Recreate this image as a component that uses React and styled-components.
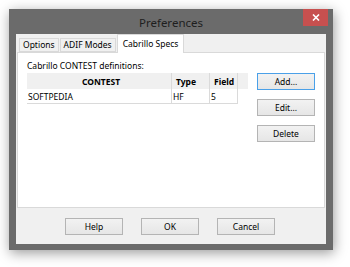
import React from 'react';
import styled, { createGlobalStyle } from 'styled-components';

const GlobalStyle = createGlobalStyle`
    html, body {
        margin: 0;
        background: #ffffff;
    }
    body {
        font-family: "Noto Sans", "Open Sans", sans-serif;
        font-size: 8.5px;
        color: #000;
    }
`;

const contests = [
    { name: 'SOFTPEDIA', type: 'HF', field: '5' },
];

const Page = () => {
    return (
        <Screen>
            <GlobalStyle />
            <Window>
                <TitleBar>
                    <Title>Preferences</Title>
                    <CloseButton>
                        <svg width="8" height="7" viewBox="0 0 8 7">
                            <path d="M1 0.5 L7 6.5 M7 0.5 L1 6.5" stroke="#fff" strokeWidth="1.6" />
                        </svg>
                    </CloseButton>
                </TitleBar>
                <Client>
                    <TabStrip>
                        <Tab>Options</Tab>
                        <Tab>ADIF Modes</Tab>
                        <Tab active>Cabrillo Specs</Tab>
                    </TabStrip>
                    <Panel>
                        <ListArea>
                            <Label>Cabrillo CONTEST definitions:</Label>
                            <Table>
                                <HeaderRow>
                                    <HeadCell width={145}>CONTEST</HeadCell>
                                    <HeadCell width={38} align="left">Type</HeadCell>
                                    <HeadCell width={28} align="left">Field</HeadCell>
                                    <HeadCell width={10} />
                                </HeaderRow>
                                {contests.map((c) => (
                                    <DataRow key={c.name}>
                                        <Cell width={145}>{c.name}</Cell>
                                        <Cell width={38}>{c.type}</Cell>
                                        <Cell width={28}>{c.field}</Cell>
                                    </DataRow>
                                ))}
                            </Table>
                        </ListArea>
                        <SideButtons>
                            <Button primary>Add...</Button>
                            <Button>Edit...</Button>
                            <Button>Delete</Button>
                        </SideButtons>
                    </Panel>
                    <Footer>
                        <Button>Help</Button>
                        <Button>OK</Button>
                        <Button>Cancel</Button>
                    </Footer>
                </Client>
            </Window>
        </Screen>
    );
};

export default Page;

const Screen = styled.div`
    width: 350px;
    height: 267px;
    padding: 9px 0 0 9px;
    box-sizing: border-box;
    overflow: hidden;
`;

const Window = styled.div`
    width: 324px;
    height: 241px;
    background: #6b6b6b;
    display: flex;
    flex-direction: column;
    box-shadow: 1px 3px 12px rgba(0, 0, 0, 0.4);
`;

const TitleBar = styled.div`
    height: 24px;
    position: relative;
    display: flex;
    align-items: center;
    justify-content: center;
`;

const Title = styled.div`
    font-size: 11.5px;
    color: #1e1e1e;
    margin-top: 2px;
`;

const CloseButton = styled.div`
    position: absolute;
    top: 0;
    right: 5px;
    width: 25px;
    height: 17px;
    background: #c7504f;
    display: flex;
    align-items: center;
    justify-content: center;
`;

const Client = styled.div`
    flex: 1;
    margin: 1px 7px 6px 7px;
    background: #f0f0f0;
    display: flex;
    flex-direction: column;
    padding: 0 1px;
`;

const TabStrip = styled.div`
    display: flex;
    align-items: flex-end;
    height: 18px;
    padding-left: 2px;
    position: relative;
    z-index: 1;
`;

const Tab = styled.div`
    height: ${(p) => (p.active ? '18px' : '12px')};
    padding: 0 ${(p) => (p.active ? '5px' : '3px')};
    margin-right: ${(p) => (p.active ? '0' : '1px')};
    margin-bottom: ${(p) => (p.active ? '-1px' : '0')};
    background: ${(p) => (p.active ? '#ffffff' : '#f0f0f0')};
    border: 1px solid #d9d9d9;
    border-bottom: ${(p) => (p.active ? 'none' : '1px solid #d9d9d9')};
    display: flex;
    align-items: center;
    font-size: 8.5px;
    line-height: 1;
    color: #000;
`;

const Panel = styled.div`
    height: 156px;
    background: #ffffff;
    border: 1px solid #d9d9d9;
    display: flex;
    padding: 7px 0 0 9px;
    box-sizing: border-box;
`;

const ListArea = styled.div`
    display: flex;
    flex-direction: column;
`;

const Label = styled.div`
    font-size: 8.5px;
    line-height: 11px;
    margin-bottom: 2px;
`;

const Table = styled.div`
    display: flex;
    flex-direction: column;
`;

const HeaderRow = styled.div`
    display: flex;
    height: 16px;
    background: #f0f0f0;
`;

const HeadCell = styled.div`
    width: ${(p) => p.width}px;
    box-sizing: border-box;
    border-right: 1px solid #dadada;
    font-weight: bold;
    font-size: 8.5px;
    display: flex;
    align-items: center;
    justify-content: ${(p) => (p.align === 'left' ? 'flex-start' : 'center')};
    padding-left: 4px;
    &:last-child {
        border-right: none;
    }
`;

const DataRow = styled.div`
    display: flex;
    height: 15px;
`;

const Cell = styled.div`
    width: ${(p) => p.width}px;
    box-sizing: border-box;
    border-right: 1px solid #dadada;
    border-bottom: 1px solid #dadada;
    font-size: 8.5px;
    display: flex;
    align-items: center;
    padding-left: 1px;
`;

const SideButtons = styled.div`
    display: flex;
    flex-direction: column;
    gap: 9px;
    margin-left: 9px;
    margin-top: 13px;
`;

const Button = styled.div`
    width: 58px;
    height: 17px;
    box-sizing: border-box;
    border: 1px solid ${(p) => (p.primary ? '#4aa0e8' : '#b4b4b4')};
    background: linear-gradient(#f2f2f2, #e6e6e6);
    display: flex;
    align-items: center;
    justify-content: center;
    font-size: 8.5px;
    color: #000;
`;

const Footer = styled.div`
    flex: 1;
    display: flex;
    justify-content: center;
    align-items: center;
    gap: 18px;
    padding-right: 2px;
`;
